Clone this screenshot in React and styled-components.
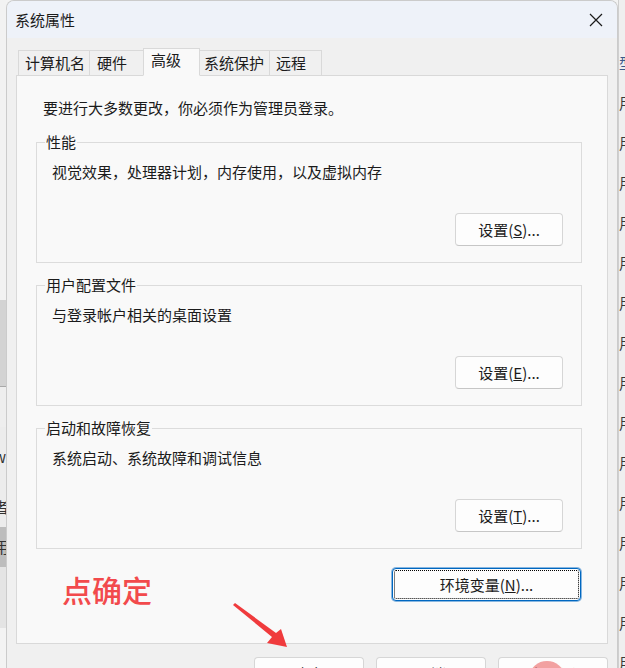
import React from "react";
import styled, { createGlobalStyle } from "styled-components";

const GlobalStyle = createGlobalStyle`
  html, body { margin: 0; padding: 0; }
  body {
    background: #f3f3f3;
    font-family: "Noto Sans CJK SC", "Noto Sans", sans-serif;
    color: #1b1b1b;
  }
  * { box-sizing: border-box; }
`;

const Page = styled.div`
  position: relative;
  display: flex;
  width: 625px;
  height: 668px;
  overflow: hidden;
`;

const LeftStrip = styled.div`
  width: 6px;
  flex: none;
  display: flex;
  flex-direction: column;
  overflow: hidden;
`;

const StripBlock = styled.div`
  flex: none;
  height: ${(p) => p.h}px;
  background: ${(p) => p.bg};
  border-bottom: ${(p) => (p.line ? "1px solid #a9a9a9" : "none")};
  font-size: 15px;
  line-height: ${(p) => p.h}px;
  color: #333;
  white-space: nowrap;
  text-indent: -6px;
`;

const RightStrip = styled.div`
  width: 7px;
  flex: none;
  background: #efefef;
  border-left: 1px solid #cfcfcf;
  overflow: hidden;
  padding-top: 43px;
  display: flex;
  flex-direction: column;
`;

const Glyph = styled.span`
  font-size: 15px;
  line-height: 40px;
  height: 40px;
  color: ${(p) => p.c || "#3a3a3a"};
  white-space: nowrap;
`;

const Dialog = styled.div`
  width: 612px;
  flex: none;
  background: #f0f0f0;
  border: 1px solid #cbcbcb;
  border-bottom: none;
  border-radius: 8px 8px 0 0;
  display: flex;
  flex-direction: column;
  overflow: hidden;
`;

const TitleBar = styled.div`
  height: 37px;
  flex: none;
  background: #eef2f9;
  display: flex;
  align-items: center;
  justify-content: space-between;
  padding: 0 14px 0 8px;
  font-size: 15px;
  line-height: 20px;
`;

const Body = styled.div`
  padding: 10px 9px 0 9px;
  display: flex;
  flex-direction: column;
`;

const TabRow = styled.div`
  display: flex;
  align-items: flex-end;
  height: 28px;
  padding-left: 2px;
  position: relative;
  z-index: 1;
  margin-bottom: -1px;
`;

const Tab = styled.div`
  width: ${(p) => p.w}px;
  height: ${(p) => (p.active ? 28 : 26)}px;
  padding-left: ${(p) => p.pl}px;
  background: ${(p) => (p.active ? "#f9f9f9" : "#f0f0f0")};
  border: 1px solid #d9d9d9;
  border-bottom: ${(p) => (p.active ? "1px solid #f9f9f9" : "1px solid #d9d9d9")};
  margin-left: ${(p) => (p.first ? 0 : -1)}px;
  font-size: 15px;
  line-height: ${(p) => (p.active ? 22 : 24)}px;
  white-space: nowrap;
  position: relative;
  z-index: ${(p) => (p.active ? 2 : 1)};
`;

const Panel = styled.div`
  height: 569px;
  background: #f9f9f9;
  border: 1px solid #d9d9d9;
  padding: 22px 25px 0 19px;
  display: flex;
  flex-direction: column;
`;

const Info = styled.div`
  font-size: 15px;
  line-height: 20px;
  margin-left: 7px;
  margin-bottom: 24px;
`;

const Group = styled.div`
  position: relative;
  height: 121px;
  border: 1px solid #dcdcdc;
  padding: 19px 17px 0 15px;
  margin-bottom: ${(p) => p.mb}px;
  display: flex;
  flex-direction: column;
`;

const Legend = styled.span`
  position: absolute;
  top: -11px;
  left: 8px;
  padding: 0 1px;
  background: #f9f9f9;
  font-size: 15px;
  line-height: 20px;
`;

const Desc = styled.div`
  font-size: 15px;
  line-height: 20px;
  height: 20px;
`;

const Btn = styled.button`
  width: ${(p) => p.w}px;
  height: 33px;
  flex: none;
  background: #fdfdfd;
  border: 1px solid #d6d6d6;
  border-bottom-color: #c6c6c6;
  border-radius: 4px;
  font-family: inherit;
  font-size: 15px;
  line-height: 20px;
  color: #1b1b1b;
  padding: 0;
  align-self: flex-end;
  margin-top: ${(p) => p.mt || 0}px;
  margin-right: ${(p) => p.mr || 0}px;
`;

const FocusBtn = styled(Btn)`
  border: 1px solid #0067c0;
  box-shadow: 0 0 0 1px rgba(0, 103, 192, 0.45);
  outline: 1px dotted #000;
  outline-offset: -3px;
`;

const BottomRow = styled.div`
  display: flex;
  justify-content: flex-end;
  gap: 12px;
  margin-top: 13px;
`;

const Note = styled.div`
  position: absolute;
  left: 62px;
  top: 569px;
  font-size: 30px;
  line-height: 40px;
  font-weight: 500;
  color: #f24a4c;
`;

const Arrow = styled.svg`
  position: absolute;
  left: 230px;
  top: 600px;
`;

const Blob = styled.div`
  position: absolute;
  left: 530px;
  top: 661px;
  width: 34px;
  height: 30px;
  border-radius: 50%;
  background: rgba(238, 130, 130, 0.75);
`;

const Close = () => (
  <svg width="14" height="14" viewBox="0 0 14 14">
    <path d="M1 1 L13 13 M13 1 L1 13" stroke="#1b1b1b" strokeWidth="1.2" fill="none" />
  </svg>
);

const groups = [
  { title: "性能", desc: "视觉效果，处理器计划，内存使用，以及虚拟内存", key: "S" },
  { title: "用户配置文件", desc: "与登录帐户相关的桌面设置", key: "E" },
  { title: "启动和故障恢复", desc: "系统启动、系统故障和调试信息", key: "T" },
];

const tabs = [
  { t: "计算机名", w: 72, pl: 6 },
  { t: "硬件", w: 55, pl: 7 },
  { t: "高级", w: 57, pl: 7, active: true },
  { t: "系统保护", w: 71, pl: 4 },
  { t: "远程", w: 53, pl: 6 },
];

export default function App() {
  return (
    <>
      <GlobalStyle />
      <Page>
        <LeftStrip>
          <StripBlock h={300} bg="#f2f2f2" />
          <StripBlock h={87} bg="#d3d3d3" line />
          <StripBlock h={40} bg="#eeeeee" />
          <StripBlock h={60} bg="#ececec">w</StripBlock>
          <StripBlock h={40} bg="#ececec">者</StripBlock>
          <StripBlock h={40} bg="#bdbdbd">用</StripBlock>
          <StripBlock h={61} bg="#e4e4e4" />
        </LeftStrip>
        <Dialog>
          <TitleBar>
            <span>系统属性</span>
            <Close />
          </TitleBar>
          <Body>
            <TabRow>
              {tabs.map((tb, i) => (
                <Tab key={tb.t} w={tb.w} pl={tb.pl} active={tb.active} first={i === 0}>
                  {tb.t}
                </Tab>
              ))}
            </TabRow>
            <Panel>
              <Info>要进行大多数更改，你必须作为管理员登录。</Info>
              {groups.map((g, i) => (
                <Group key={g.title} mb={i < 2 ? 22 : 19}>
                  <Legend>{g.title}</Legend>
                  <Desc>{g.desc}</Desc>
                  <Btn w={108} mt={31} mr={1}>
                    设置(<u>{g.key}</u>)...
                  </Btn>
                </Group>
              ))}
              <FocusBtn w={189} mr={1}>
                环境变量(<u>N</u>)...
              </FocusBtn>
            </Panel>
            <BottomRow>
              <Btn w={110}>确定</Btn>
              <Btn w={110}>取消</Btn>
              <Btn w={110}>应用(A)</Btn>
            </BottomRow>
          </Body>
        </Dialog>
        <RightStrip>
          <Glyph c="#3b5a8a">型</Glyph>
          {Array.from({ length: 15 }).map((_, i) => (
            <Glyph key={i}>用</Glyph>
          ))}
        </RightStrip>
        <Note>点确定</Note>
        <Arrow width="64" height="50" viewBox="0 0 64 50">
          <polygon
            points="3,5 5,3 46,33 51,29 57,47 37,43 42,37"
            fill="#f03b3d"
          />
        </Arrow>
        <Blob />
      </Page>
    </>
  );
}
